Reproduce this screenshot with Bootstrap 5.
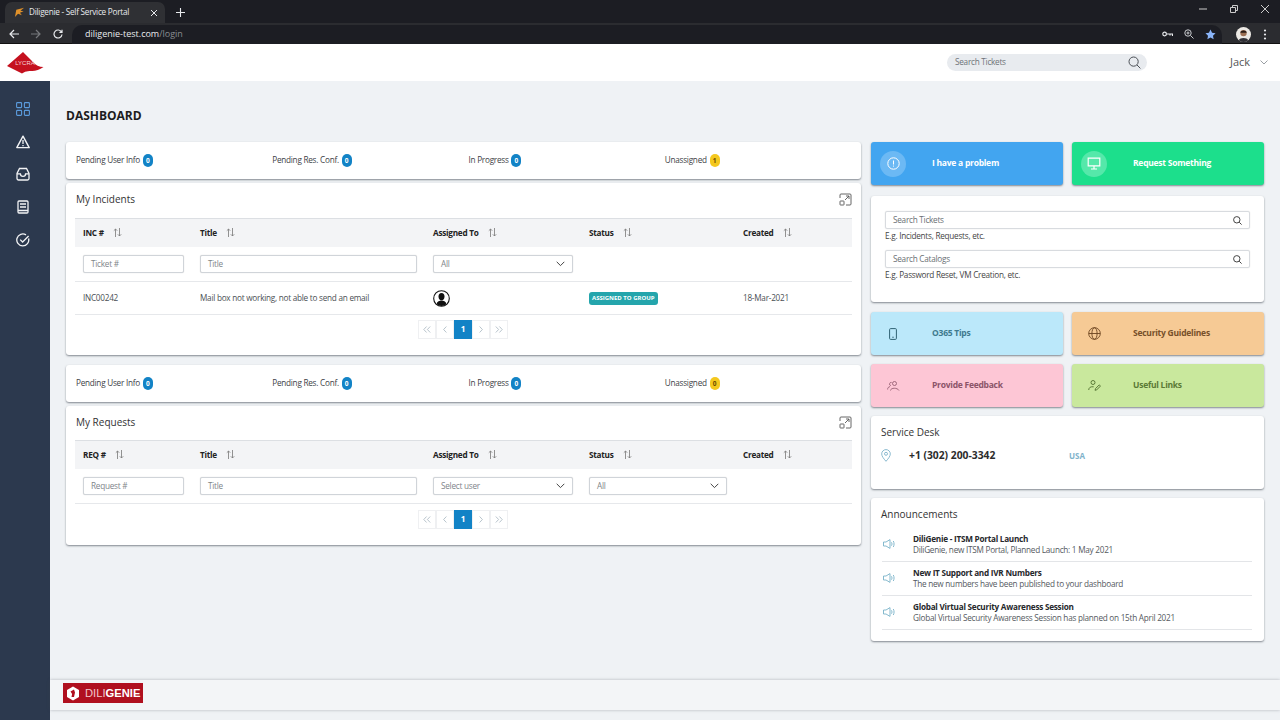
<!DOCTYPE html>
<html lang="en">
<head>
  <meta charset="UTF-8">
  <title>Diligenie - Self Service Portal</title>
  <link href="https://cdn.jsdelivr.net/npm/bootstrap@5.3.2/dist/css/bootstrap.min.css" rel="stylesheet">
  <style>
    html, body { height: 720px; overflow: hidden; }
    body { background: #eff2f5; font-family: "Open Sans", "Noto Sans", sans-serif; font-size: 8.2px; letter-spacing: -.25px; color: #333; }
    svg { display: block; flex: none; }

    /* browser chrome */
    .tabstrip { height: 23px; background: #1c1d23; padding-left: 5px; color: #e8eaed; }
    .chrome-tab { width: 160px; height: 21px; margin-top: 2px; background: #2f3034; border-radius: 7px 7px 0 0; padding: 0 7px 0 9px; }
    .new-tab { margin-left: 11px; margin-top: 2px; }
    .win-btns { gap: 23px; padding: 5px 11px 0 0; }
    .toolbar { height: 21px; background: #2b2c30; padding: 2px 13px 0 9px; gap: 12px; border-bottom: 1px solid #111; }
    .url-pill { height: 19px; margin: 0 2px 0 -3px; background: #1c1d23; border-radius: 10px 10px 0 0; font-size: 9px; letter-spacing: 0; color: #e8eaed; padding: 0 6px 0 13px; }
    .url-pill span { color: #8b8d92; }
    .url-icons { gap: 11px; }

    /* app header */
    .app-top { height: 37px; background: #fff; padding: 0 8px 0 7px; }
    .top-search { width: 200px; height: 17px; background: #e8ebef; border-radius: 9px; padding: 0 6px 0 8px; margin-right: 83px; color: #6e7378; }
    .top-user { width: 42px; font-size: 11px; letter-spacing: 0; color: #555; gap: 10px; }

    .side-rail { width: 50px; height: 639px; background: #2c394e; padding: 21px 4px 0 0; gap: 14.7px; }
    .page-area { width: 1230px; height: 639px; }
    .page-title { font-size: 12px; font-weight: 700; letter-spacing: 0; color: #1d1d1d; margin: 27px 0 18px 16px; line-height: 16px; }
    .col-left { width: 795px; margin-left: 16px; }
    .col-right { width: 393px; margin-left: 10px; }

    .panel { background: #fff; border-radius: 3px; box-shadow: 0 1px 2px rgba(40,50,60,.55); }
    .status-bar { height: 37px; padding-left: 10px; }
    .status-second { margin-top: 10px; }
    .status-item { width: 196.25px; font-weight: 500; color: #3d4146; }
    .pill { display: inline-flex; width: 10px; height: 13px; margin-left: 1px; vertical-align: middle; align-items: center; justify-content: center; border-radius: 5px; background: #1283c6; color: #fff; font-size: 6.5px; font-weight: 700; letter-spacing: 0; }
    .pill-yellow { background: #f4c81e; color: #6a4b00; }

    .list-panel { margin-top: 4px; padding: 0 9px; }
    .panel-head { height: 35px; padding: 0 0 2px 1px; font-size: 10px; letter-spacing: 0; color: #333; font-weight: 500; }
    .tickets { table-layout: fixed; width: 777px; border-collapse: collapse; }
    .tickets th { height: 28px; background: #f3f4f6; border-top: 1px solid #dcdfe3; padding: 0 8px; font-weight: 700; color: #222; }
    .tickets td { padding: 0 8px; border-bottom: 1px solid #e6e8eb; color: #4a4f54; }
    .tickets .filter-row td { height: 35px; }
    .tickets .data-row td { height: 33px; }
    .col-a { width: 117px; }
    .col-b { width: 233px; }
    .col-c { width: 156px; }
    .col-d { width: 154px; }
    .col-e { width: 117px; }
    .th-in { gap: 9px; }
    .cell-input { width: 100%; height: 18px; border: 1px solid #d0d4d9; border-radius: 2px; padding: 0 7px; color: #80858a; background: #fff; box-shadow: 0 0 1px rgba(0,0,0,.2); }
    .group-tag { display: inline-block; background: #24a5ac; color: #fff; border-radius: 3px; font-size: 6px; font-weight: 700; letter-spacing: 0; padding: 2px 3px; line-height: 9px; white-space: nowrap; }
    .pager { height: 40px; padding: 5px 1px 0 0; }
    .pager-box { width: 18px; height: 19px; border: 1px solid #eff0f2; color: #a6b5bf; }
    .pager-on { background: #1283c6; color: #fff; border-color: #1283c6; font-weight: 700; }

    /* the requests panel sits a little tighter than the incidents one */
    .list-short .panel-head { height: 34px; }
    .list-short .pager { height: 41px; padding-top: 6px; }

    .tile-row { gap: 9px; }
    .tile { width: 192px; height: 43px; border-radius: 3px; padding-left: 9px; font-weight: 700; font-size: 8.5px; box-shadow: 0 1px 2px rgba(40,50,60,.55); }
    .tile-ico { width: 26px; height: 26px; border-radius: 50%; margin-right: 26px; }
    .tile-blue { background: #42a5f0; color: #fff; }
    .tile-blue .tile-ico { background: #6cb9f4; }
    .tile-green { background: #1cdf8c; color: #fff; }
    .tile-green .tile-ico { background: #55e8aa; }
    .tile-sky { background: #bbe8fa; color: #3e7a8e; }
    .tile-orange { background: #f6ca95; color: #77502a; }
    .tile-pink { background: #fdc6d5; color: #8b5468; }
    .tile-lime { background: #c9e89d; color: #5b7a36; }
    .tile-gap { margin-bottom: 9px; }

    .search-box { height: 106px; margin: 11px 0 10px; padding: 15px 14px 0; }
    .find-field { height: 18px; border: 1px solid #d8dbdf; border-radius: 2px; padding: 0 7px; color: #6a6f74; box-shadow: 0 0 1px rgba(0,0,0,.2); }
    .find-hint { color: #444; line-height: 12px; margin: 1px 0 8px; }

    .desk-box { height: 73px; margin-top: 9px; padding: 9px 10px 0; }
    .box-title { font-size: 10px; letter-spacing: 0; color: #333; font-weight: 500; line-height: 15px; }
    .desk-line { margin-top: 8px; }
    .desk-phone { font-weight: 700; font-size: 10.3px; letter-spacing: 0; color: #2c2c2c; width: 160px; margin-left: 18px; }
    .desk-region { color: #7fb3cb; font-weight: 700; font-size: 8px; letter-spacing: 0; }

    .news-box { height: 143px; margin-top: 9px; padding: 9px 10px 0; }
    .news-list { margin-top: 6px; }
    .news-item { height: 34px; margin: 0 2px 0 1px; border-bottom: 1px solid #e3e5e8; padding: 0 0 1px 1px; }
    .news-ico { width: 30px; }
    .news-head { font-weight: 700; color: #26282b; line-height: 11px; }
    .news-sub { color: #54595e; line-height: 11px; }

    .app-foot { position: absolute; left: 50px; top: 680px; width: 1230px; height: 30px; background: #f3f5f7; box-shadow: 0 0 3px rgba(60,70,80,.35); padding: 3px 0 0 13px; }
    .dili-logo { width: 80px; height: 20px; background: #b0101f; color: #fff; font-family: "Liberation Sans", sans-serif; font-size: 11.2px; letter-spacing: 0; padding-left: 3px; gap: 5px; }
    .dili-logo b { font-weight: 700; }
    .dili-logo span { font-weight: 400; color: #f0c6ca; }
  </style>
</head>
<body>

<svg class="d-none">
  <symbol id="sort" viewBox="0 0 9 9"><path d="M2.5 9V1M.8 2.7L2.5 1l1.7 1.7M6.5 0v8M4.8 6.3L6.5 8l1.7-1.7" fill="none" stroke="#777" stroke-width=".8"/></symbol>
  <symbol id="expand" viewBox="0 0 13 13"><path d="M1 5V2a1 1 0 0 1 1-1h9a1 1 0 0 1 1 1v9a1 1 0 0 1-1 1H7M6 7l4-4M7 3h3v3" fill="none" stroke="#555" stroke-width=".9"/><rect x="1" y="8" width="4" height="4" rx=".5" fill="none" stroke="#555" stroke-width=".9"/></symbol>
  <symbol id="caret" viewBox="0 0 9 6"><path d="M.7.8L4.5 4.6 8.3.8" fill="none" stroke="#444"/></symbol>
  <symbol id="first" viewBox="0 0 8 7"><path d="M3.6.5L.8 3.5l2.8 3M7.2.5L4.4 3.5l2.8 3" fill="none" stroke="currentColor" stroke-width=".8"/></symbol>
  <symbol id="prev" viewBox="0 0 8 7"><path d="M5.4.5L2.6 3.5l2.8 3" fill="none" stroke="currentColor" stroke-width=".8"/></symbol>
  <symbol id="next" viewBox="0 0 8 7"><path d="M2.6.5l2.8 3-2.8 3" fill="none" stroke="currentColor" stroke-width=".8"/></symbol>
  <symbol id="last" viewBox="0 0 8 7"><path d="M.8.5l2.8 3-2.8 3M4.4.5l2.8 3-2.8 3" fill="none" stroke="currentColor" stroke-width=".8"/></symbol>
  <symbol id="glass" viewBox="0 0 9 9"><circle cx="3.8" cy="3.8" r="3.2" fill="none" stroke="#444"/><path d="M6.2 6.2L8.6 8.6" stroke="#444"/></symbol>
  <symbol id="horn" viewBox="0 0 13 10"><path d="M.5 3h2.5L7 .6v8.8L3 7H.5zM8.5 3.3c.6 1 .6 2.4 0 3.4M10.3 2c1 1.8 1 4.2 0 6" fill="none" stroke="#78b2c8" stroke-width=".9"/></symbol>
</svg>

<!-- browser frame -->
<div class="tabstrip d-flex align-items-start justify-content-between">
  <div class="d-flex align-items-center">
    <div class="chrome-tab d-flex align-items-center justify-content-between">
      <div class="d-flex align-items-center gap-1">
        <svg width="11" height="11" viewBox="0 0 12 12"><path d="M1 11 L2.5 3 L11 .8 L7 4 L10.5 4.6 L6.5 6.2 L8.6 9 L4.4 7.4 Z" fill="#e0912a"/></svg>
        <span>Diligenie - Self Service Portal</span>
      </div>
      <svg width="8" height="8" viewBox="0 0 8 8"><path d="M1 1L7 7M7 1L1 7" stroke="#e8eaed" stroke-width="1"/></svg>
    </div>
    <svg class="new-tab" width="9" height="9" viewBox="0 0 9 9"><path d="M4.5 0v9M0 4.5h9" stroke="#e8eaed" stroke-width="1.1"/></svg>
  </div>
  <div class="win-btns d-flex align-items-center">
    <svg width="8" height="8" viewBox="0 0 8 8"><path d="M0 4H8" stroke="#ccc"/></svg>
    <svg width="8" height="8" viewBox="0 0 8 8"><path d="M.5 2.5h5v5h-5zM2.5 2.5V.5h5v5h-2" fill="none" stroke="#ccc"/></svg>
    <svg width="8" height="8" viewBox="0 0 8 8"><path d="M0 0L8 8M8 0L0 8" stroke="#ccc"/></svg>
  </div>
</div>
<div class="toolbar d-flex align-items-center">
  <svg width="10" height="10" viewBox="0 0 10 10"><path d="M10 5H1M5 1L1 5l4 4" fill="none" stroke="#e8eaed" stroke-width="1.2"/></svg>
  <svg width="10" height="10" viewBox="0 0 10 10"><path d="M0 5h9M5 1l4 4-4 4" fill="none" stroke="#77797d" stroke-width="1.2"/></svg>
  <svg width="10" height="10" viewBox="0 0 10 10"><path d="M8.5 3A4 4 0 1 0 9 5.5M9 .8V3.4H6.4" fill="none" stroke="#e8eaed" stroke-width="1.2"/></svg>
  <div class="url-pill d-flex align-items-center justify-content-between flex-grow-1">
    <div>diligenie-test.com<span>/login</span></div>
    <div class="url-icons d-flex align-items-center">
      <svg width="11" height="8" viewBox="0 0 11 8"><circle cx="2.6" cy="4" r="1.8" fill="none" stroke="#e8eaed" stroke-width="1.2"/><path d="M4.5 4H10.5V6M8 4V5.6" fill="none" stroke="#e8eaed" stroke-width="1.2"/></svg>
      <svg width="10" height="10" viewBox="0 0 10 10"><circle cx="4" cy="4" r="3.2" fill="none" stroke="#c9ccd0"/><path d="M6.5 6.5L9.5 9.5M2.5 4h3M4 2.5v3" stroke="#c9ccd0"/></svg>
      <svg width="11" height="11" viewBox="0 0 24 24"><path d="M12 1l3.4 7.2 7.6 1-5.6 5.4 1.5 7.8L12 18.6 5.1 22.4l1.5-7.8L1 9.2l7.6-1z" fill="#8ab4f8"/></svg>
    </div>
  </div>
  <svg width="15" height="15" viewBox="0 0 16 16"><circle cx="8" cy="8" r="8" fill="#ece9e4"/><circle cx="8" cy="6.5" r="3.4" fill="#9c6f52"/><path d="M4.6 6C4.8 2.8 11.2 2.8 11.4 6Z" fill="#2a1c16"/><path d="M3 14c1-3 9-3 10 0a8 8 0 0 1-10 0z" fill="#2f2f35"/></svg>
  <svg width="4" height="11" viewBox="0 0 4 11"><circle cx="2" cy="1.5" r="1.1" fill="#e8eaed"/><circle cx="2" cy="5.5" r="1.1" fill="#e8eaed"/><circle cx="2" cy="9.5" r="1.1" fill="#e8eaed"/></svg>
</div>

<!-- app header -->
<div class="app-top d-flex align-items-center justify-content-between">
  <svg width="37" height="22" viewBox="0 0 37 22">
    <path d="M0 14 L16 0 L26 10 Q30 15 36.5 15 Q30 19.5 24 19 Q18 18.5 15 21.5 Z" fill="#c5111f"/>
    <text x="18" y="13" text-anchor="middle" font-family="Liberation Sans, sans-serif" font-size="6" letter-spacing="0" fill="#f7d5d8">LYCRA</text>
  </svg>
  <div class="d-flex align-items-center">
    <div class="top-search d-flex align-items-center justify-content-between">
      <span>Search Tickets</span>
      <svg width="13" height="13" viewBox="0 0 13 13"><circle cx="5.6" cy="5.6" r="4.6" fill="none" stroke="#4b5056"/><path d="M9 9l3.4 3.4" stroke="#4b5056"/></svg>
    </div>
    <div class="top-user d-flex align-items-center">
      <span>Jack</span>
      <svg width="8" height="5" viewBox="0 0 8 5"><path d="M.5.5L4 4 7.5.5" fill="none" stroke="#9a9fa4"/></svg>
    </div>
  </div>
</div>

<div class="d-flex">
  <!-- side nav -->
  <div class="side-rail d-flex flex-column align-items-center flex-shrink-0">
    <svg width="14" height="14" viewBox="0 0 14 14" fill="none" stroke="#5b9bdc" stroke-width="1.1"><rect x=".6" y=".6" width="5" height="5" rx=".8"/><rect x="8.4" y=".6" width="5" height="5" rx=".8"/><rect x=".6" y="8.4" width="5" height="5" rx=".8"/><rect x="8.4" y="8.4" width="5" height="5" rx=".8"/></svg>
    <svg class="mt-1" width="14" height="14" viewBox="0 0 14 14"><path d="M7 1.2L13.2 12.6H.8Z" fill="none" stroke="#f2f3f5" stroke-width="1.4" stroke-linejoin="round"/><path d="M7 5v4M7 10v1.3" stroke="#f2f3f5" stroke-width="1.3"/></svg>
    <svg class="mt-1" width="14" height="14" viewBox="0 0 14 14" fill="none" stroke="#f2f3f5" stroke-width="1.3"><path d="M3.5 1.5h7L13 6.5v5a1.5 1.5 0 0 1-1.5 1.5h-9A1.5 1.5 0 0 1 1 11.5v-5z"/><path d="M1 6.8h3.4a2.6 2.6 0 0 0 5.2 0H13"/></svg>
    <svg class="mt-1" width="14" height="14" viewBox="0 0 14 14" fill="none" stroke="#f2f3f5" stroke-width="1.3"><rect x="2" y="1" width="10" height="12" rx="1"/><path d="M4 4h6M4 7h6M2 10.5h10"/></svg>
    <svg class="mt-1" width="14" height="14" viewBox="0 0 14 14" fill="none" stroke="#f2f3f5" stroke-width="1.3"><path d="M12.6 5.5A6 6 0 1 1 10 1.9"/><path d="M4.2 6.6L6.6 9l6-6"/></svg>
  </div>

  <div class="page-area">
    <div class="page-title">DASHBOARD</div>
    <div class="d-flex align-items-start">

      <!-- left column -->
      <div class="col-left">
        <div class="panel status-bar d-flex align-items-center">
          <div class="status-item">Pending User Info <span class="pill">0</span></div>
          <div class="status-item">Pending Res. Conf. <span class="pill">0</span></div>
          <div class="status-item">In Progress <span class="pill">0</span></div>
          <div class="status-item">Unassigned <span class="pill pill-yellow">1</span></div>
        </div>
        <div class="panel list-panel">
          <div class="panel-head d-flex align-items-center justify-content-between">
            <span>My Incidents</span>
            <svg width="13" height="13"><use href="#expand"/></svg>
          </div>
          <table class="tickets">
            <colgroup><col class="col-a"><col class="col-b"><col class="col-c"><col class="col-d"><col class="col-e"></colgroup>
            <tr>
              <th><div class="th-in d-flex align-items-center">INC # <svg width="9" height="9"><use href="#sort"/></svg></div></th>
              <th><div class="th-in d-flex align-items-center">Title <svg width="9" height="9"><use href="#sort"/></svg></div></th>
              <th><div class="th-in d-flex align-items-center">Assigned To <svg width="9" height="9"><use href="#sort"/></svg></div></th>
              <th><div class="th-in d-flex align-items-center">Status <svg width="9" height="9"><use href="#sort"/></svg></div></th>
              <th><div class="th-in d-flex align-items-center">Created <svg width="9" height="9"><use href="#sort"/></svg></div></th>
            </tr>
            <tr class="filter-row">
              <td><div class="cell-input d-flex align-items-center">Ticket #</div></td>
              <td><div class="cell-input d-flex align-items-center">Title</div></td>
              <td><div class="cell-input d-flex align-items-center justify-content-between">All <svg width="9" height="6"><use href="#caret"/></svg></div></td>
              <td></td>
              <td></td>
            </tr>
            <tr class="data-row">
              <td>INC00242</td>
              <td>Mail box not working, not able to send an email</td>
              <td><svg width="17" height="17" viewBox="0 0 17 17"><circle cx="8.5" cy="8.5" r="7.8" fill="#fff" stroke="#111" stroke-width="1.1"/><ellipse cx="8.5" cy="6.6" rx="3" ry="3.7" fill="#111"/><path d="M3.6 14.2c.6-3 3-3.4 4.9-3.6 1.9.2 4.3.6 4.9 3.6a7.6 7.6 0 0 1-9.8 0z" fill="#111"/></svg></td>
              <td><span class="group-tag">ASSIGNED TO GROUP</span></td>
              <td>18-Mar-2021</td>
            </tr>
          </table>
          <div class="pager d-flex justify-content-center align-items-start">
            <div class="pager-box d-flex align-items-center justify-content-center"><svg width="8" height="7"><use href="#first"/></svg></div>
            <div class="pager-box d-flex align-items-center justify-content-center"><svg width="8" height="7"><use href="#prev"/></svg></div>
            <div class="pager-box pager-on d-flex align-items-center justify-content-center">1</div>
            <div class="pager-box d-flex align-items-center justify-content-center"><svg width="8" height="7"><use href="#next"/></svg></div>
            <div class="pager-box d-flex align-items-center justify-content-center"><svg width="8" height="7"><use href="#last"/></svg></div>
          </div>
        </div>

        <div class="panel status-bar status-second d-flex align-items-center">
          <div class="status-item">Pending User Info <span class="pill">0</span></div>
          <div class="status-item">Pending Res. Conf. <span class="pill">0</span></div>
          <div class="status-item">In Progress <span class="pill">0</span></div>
          <div class="status-item">Unassigned <span class="pill pill-yellow">0</span></div>
        </div>
        <div class="panel list-panel list-short">
          <div class="panel-head d-flex align-items-center justify-content-between">
            <span>My Requests</span>
            <svg width="13" height="13"><use href="#expand"/></svg>
          </div>
          <table class="tickets">
            <colgroup><col class="col-a"><col class="col-b"><col class="col-c"><col class="col-d"><col class="col-e"></colgroup>
            <tr>
              <th><div class="th-in d-flex align-items-center">REQ # <svg width="9" height="9"><use href="#sort"/></svg></div></th>
              <th><div class="th-in d-flex align-items-center">Title <svg width="9" height="9"><use href="#sort"/></svg></div></th>
              <th><div class="th-in d-flex align-items-center">Assigned To <svg width="9" height="9"><use href="#sort"/></svg></div></th>
              <th><div class="th-in d-flex align-items-center">Status <svg width="9" height="9"><use href="#sort"/></svg></div></th>
              <th><div class="th-in d-flex align-items-center">Created <svg width="9" height="9"><use href="#sort"/></svg></div></th>
            </tr>
            <tr class="filter-row">
              <td><div class="cell-input d-flex align-items-center">Request #</div></td>
              <td><div class="cell-input d-flex align-items-center">Title</div></td>
              <td><div class="cell-input d-flex align-items-center justify-content-between">Select user <svg width="9" height="6"><use href="#caret"/></svg></div></td>
              <td><div class="cell-input d-flex align-items-center justify-content-between">All <svg width="9" height="6"><use href="#caret"/></svg></div></td>
              <td></td>
            </tr>
          </table>
          <div class="pager d-flex justify-content-center align-items-start">
            <div class="pager-box d-flex align-items-center justify-content-center"><svg width="8" height="7"><use href="#first"/></svg></div>
            <div class="pager-box d-flex align-items-center justify-content-center"><svg width="8" height="7"><use href="#prev"/></svg></div>
            <div class="pager-box pager-on d-flex align-items-center justify-content-center">1</div>
            <div class="pager-box d-flex align-items-center justify-content-center"><svg width="8" height="7"><use href="#next"/></svg></div>
            <div class="pager-box d-flex align-items-center justify-content-center"><svg width="8" height="7"><use href="#last"/></svg></div>
          </div>
        </div>
      </div>

      <!-- right column -->
      <div class="col-right">
        <div class="tile-row d-flex">
          <div class="tile tile-blue d-flex align-items-center">
            <div class="tile-ico d-flex align-items-center justify-content-center"><svg width="13" height="13" viewBox="0 0 13 13" fill="none" stroke="#fff"><circle cx="6.5" cy="6.5" r="5.7"/><path d="M6.5 3.5v4M6.5 8.6v1"/></svg></div>
            <span>I have a problem</span>
          </div>
          <div class="tile tile-green d-flex align-items-center">
            <div class="tile-ico d-flex align-items-center justify-content-center"><svg width="14" height="13" viewBox="0 0 14 13"><path d="M1.2 1.2h11.6v7.6H1.2z" fill="none" stroke="#fff" stroke-width="1.2"/><path d="M7 9v2.5M4 12h6" stroke="#fff" stroke-width="1.2"/></svg></div>
            <span>Request Something</span>
          </div>
        </div>

        <div class="panel search-box">
          <div class="find-field d-flex align-items-center justify-content-between">Search Tickets <svg width="9" height="9"><use href="#glass"/></svg></div>
          <div class="find-hint">E.g. Incidents, Requests, etc.</div>
          <div class="find-field d-flex align-items-center justify-content-between">Search Catalogs <svg width="9" height="9"><use href="#glass"/></svg></div>
          <div class="find-hint">E.g. Password Reset, VM Creation, etc.</div>
        </div>

        <div class="tile-row tile-gap d-flex">
          <div class="tile tile-sky d-flex align-items-center">
            <div class="tile-ico d-flex align-items-center justify-content-center"><svg width="8" height="12" viewBox="0 0 8 12"><rect x=".6" y=".6" width="6.8" height="10.8" rx="1" fill="none" stroke="#2f6273"/><circle cx="4" cy="9.2" r=".7" fill="#2f6273"/></svg></div>
            <span>O365 Tips</span>
          </div>
          <div class="tile tile-orange d-flex align-items-center">
            <div class="tile-ico d-flex align-items-center justify-content-center"><svg width="13" height="13" viewBox="0 0 13 13" fill="none" stroke="#6b4420" stroke-width=".9"><circle cx="6.5" cy="6.5" r="5.8"/><ellipse cx="6.5" cy="6.5" rx="2.6" ry="5.8"/><path d="M.7 6.5h11.6"/></svg></div>
            <span>Security Guidelines</span>
          </div>
        </div>
        <div class="tile-row d-flex">
          <div class="tile tile-pink d-flex align-items-center">
            <div class="tile-ico d-flex align-items-center justify-content-center"><svg width="13" height="10" viewBox="0 0 13 10" fill="none" stroke="#8b5468" stroke-width=".8"><circle cx="7.5" cy="2.5" r="2"/><path d="M3.5 9.5c.3-3 7-3 8.5 0M3.8 4.7A1.7 1.7 0 0 1 4.6 1.4M.6 8.5c0-1.8 1-2.6 2.4-2.9"/></svg></div>
            <span>Provide Feedback</span>
          </div>
          <div class="tile tile-lime d-flex align-items-center">
            <div class="tile-ico d-flex align-items-center justify-content-center"><svg width="13" height="11" viewBox="0 0 13 11" fill="none" stroke="#4f6e2e" stroke-width=".9"><circle cx="5" cy="2.5" r="2"/><path d="M.7 10c.2-2.6 2-3.6 5-3.2M7 10.3l.6-1.8 3.6-3.6 1.3 1.2-3.7 3.6z"/></svg></div>
            <span>Useful Links</span>
          </div>
        </div>

        <div class="panel desk-box">
          <div class="box-title">Service Desk</div>
          <div class="desk-line d-flex align-items-center">
            <svg width="10" height="13" viewBox="0 0 10 13" fill="none" stroke="#7fb3cb" stroke-width=".9"><path d="M5 12.3C2.5 9.4.7 7.2.7 4.9a4.3 4.3 0 0 1 8.6 0c0 2.3-1.8 4.5-4.3 7.4z"/><circle cx="5" cy="4.8" r="1.5"/></svg>
            <span class="desk-phone">+1 (302) 200-3342</span>
            <span class="desk-region">USA</span>
          </div>
        </div>

        <div class="panel news-box">
          <div class="box-title">Announcements</div>
          <div class="news-list">
            <div class="news-item d-flex align-items-center">
              <div class="news-ico"><svg width="13" height="10"><use href="#horn"/></svg></div>
              <div><div class="news-head">DiliGenie - ITSM Portal Launch</div><div class="news-sub">DiliGenie, new ITSM Portal, Planned Launch: 1 May 2021</div></div>
            </div>
            <div class="news-item d-flex align-items-center">
              <div class="news-ico"><svg width="13" height="10"><use href="#horn"/></svg></div>
              <div><div class="news-head">New IT Support and IVR Numbers</div><div class="news-sub">The new numbers have been published to your dashboard</div></div>
            </div>
            <div class="news-item d-flex align-items-center">
              <div class="news-ico"><svg width="13" height="10"><use href="#horn"/></svg></div>
              <div><div class="news-head">Global Virtual Security Awareness Session</div><div class="news-sub">Global Virtual Security Awareness Session has planned on 15th April 2021</div></div>
            </div>
          </div>
        </div>
      </div>
    </div>
  </div>
</div>

<div class="app-foot d-flex align-items-start">
  <div class="dili-logo d-flex align-items-center">
    <svg width="14" height="15" viewBox="0 0 14 15"><path d="M7 .5l6 3.5v7l-6 3.5L1 11V4z" fill="#fff"/><path d="M4.5 5.5L8 3.5l1 3-1 4.5H5.5l.6-3z" fill="#b0101f"/></svg>
    <div><span>DILI</span><b>GENIE</b></div>
  </div>
</div>

<script src="https://cdn.jsdelivr.net/npm/bootstrap@5.3.2/dist/js/bootstrap.bundle.min.js"></script>
</body>
</html>
